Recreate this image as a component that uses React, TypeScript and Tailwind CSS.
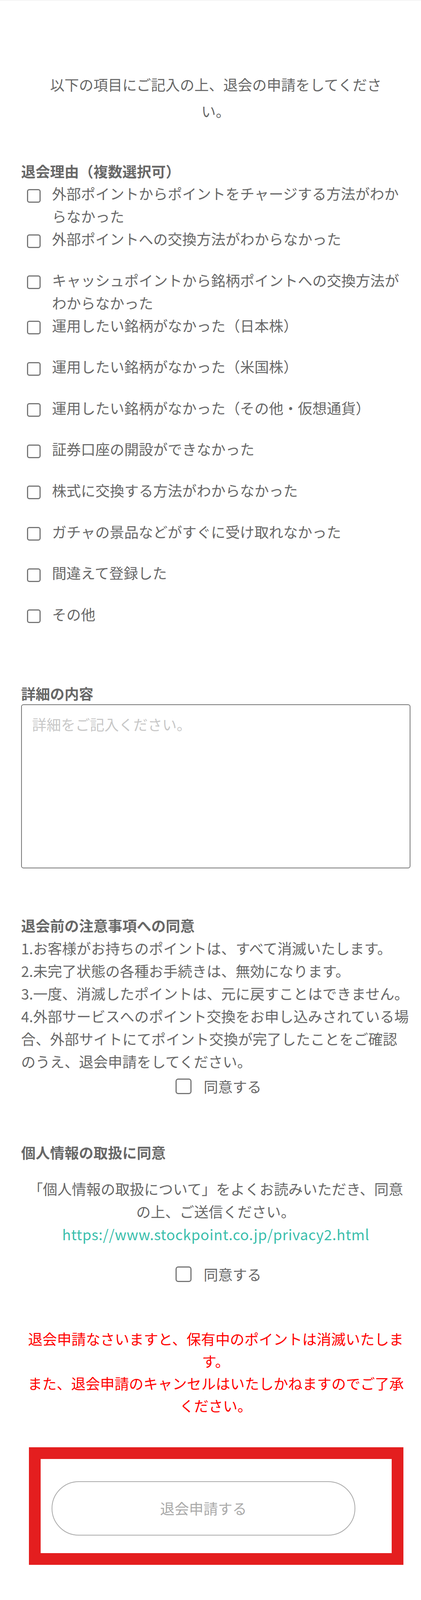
import type { ReactNode } from "react";

const REASONS = [
  "外部ポイントからポイントをチャージする方法がわからなかった",
  "外部ポイントへの交換方法がわからなかった",
  "キャッシュポイントから銘柄ポイントへの交換方法がわからなかった",
  "運用したい銘柄がなかった（日本株）",
  "運用したい銘柄がなかった（米国株）",
  "運用したい銘柄がなかった（その他・仮想通貨）",
  "証券口座の開設ができなかった",
  "株式に交換する方法がわからなかった",
  "ガチャの景品などがすぐに受け取れなかった",
  "間違えて登録した",
  "その他",
];

const NOTICES = [
  "1.お客様がお持ちのポイントは、すべて消滅いたします。",
  "2.未完了状態の各種お手続きは、無効になります。",
  "3.一度、消滅したポイントは、元に戻すことはできません。",
  "4.外部サービスへのポイント交換をお申し込みされている場合、外部サイトにてポイント交換が完了したことをご確認のうえ、退会申請をしてください。",
];

function SectionTitle({ children, className = "" }: { children: ReactNode; className?: string }) {
  return <h2 className={`font-bold ${className}`}>{children}</h2>;
}

function AgreeRow({ className = "" }: { className?: string }) {
  return (
    <label className={`flex h-[58px] items-center justify-center pl-[14px] ${className}`}>
      <span className="h-[40px] w-[41px] shrink-0 rounded-[7px] border-[3px] border-[#767676] bg-white" />
      <span className="ml-[31px] leading-[58px]">同意する</span>
    </label>
  );
}

export default function App() {
  return (
    <div className="border-t border-[#e8e8e8] bg-white font-['Noto_Sans_CJK_JP','Noto_Sans_CJK_SC',sans-serif] text-[37px] text-[#686868]">
      <div className="pl-[54px] pr-[27px] pt-[181px]">
        {/* ── Lead ── */}
        <p className="px-[40px] text-center leading-[68px]">以下の項目にご記入の上、退会の申請をしてください。</p>

        {/* ── Reasons ── */}
        <SectionTitle className="mt-[92px] leading-[56px]">退会理由（複数選択可）</SectionTitle>
        <ul>
          {REASONS.map((r) => (
            <li key={r} className="flex min-h-[105.6px] items-start">
              <span className="ml-[15px] mt-[17.5px] h-[35px] w-[35px] shrink-0 rounded-[6px] border-[3px] border-[#767676] bg-white" />
              <span className="ml-[29px] leading-[58px]">{r}</span>
            </li>
          ))}
        </ul>

        {/* ── Details ── */}
        <SectionTitle className="mt-[99px] leading-[56px]">詳細の内容</SectionTitle>
        <textarea
          placeholder="詳細をご記入ください。"
          className="block h-[420px] w-full resize-none rounded-[6px] border-2 border-[#767676] px-[26px] py-[24px] text-[37px] leading-[50px] text-[#686868] outline-none placeholder:text-[#c8c8c8]"
        />

        {/* ── Notices ── */}
        <SectionTitle className="mt-[117px] leading-[58px]">退会前の注意事項への同意</SectionTitle>
        <div className="leading-[58px]">
          {NOTICES.map((n) => (
            <p key={n}>{n}</p>
          ))}
        </div>
        <AgreeRow className="mt-[6px]" />

        {/* ── Privacy ── */}
        <SectionTitle className="mt-[111px] leading-[58px]">個人情報の取扱に同意</SectionTitle>
        <div className="mt-[35px] text-center leading-[58px]">
          <p className="px-[12px]">「個人情報の取扱について」をよくお読みいただき、同意の上、ご送信ください。</p>
          <a className="block tracking-[0.7px] text-[#3bbfad]" href="#">
            https://www.stockpoint.co.jp/privacy2.html
          </a>
        </div>
        <AgreeRow className="mt-[45px]" />

        {/* ── Warning ── */}
        <div className="mt-[108px] text-center leading-[57px] text-[#ff0000]">
          <p>退会申請なさいますと、保有中のポイントは消滅いたします。</p>
          <p>また、退会申請のキャンセルはいたしかねますのでご了承ください。</p>
        </div>

        {/* ── Submit (highlighted) ── */}
        <div className="ml-[20px] mr-[18px] mt-[78px] flex h-[301px] items-start border-[30px] border-[#e41e1f] pl-[28px] pt-[57px] leading-none">
          <button
            type="button"
            className="flex h-[139px] w-[777px] shrink-0 items-center justify-center rounded-full border-2 border-[#aaaaaa] bg-white text-[37px] leading-none text-[#aaaaaa]"
          >
            退会申請する
          </button>
        </div>
      </div>

      <div className="h-[89px]" />
      <div className="h-[45px] bg-gradient-to-b from-[#ffffff] to-[#ececec]" />
    </div>
  );
}
